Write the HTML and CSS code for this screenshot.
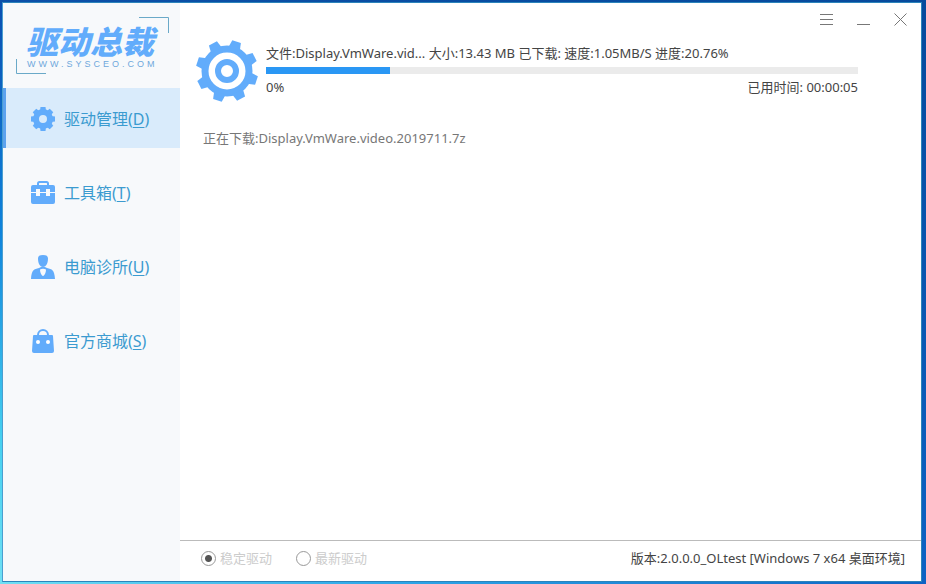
FILE: index.html
```html
<!DOCTYPE html>
<html lang="zh-CN">
<head>
<meta charset="utf-8">
<meta name="viewport" content="width=device-width, initial-scale=1">
<title>驱动总裁</title>
<link rel="stylesheet" href="styles.css">
</head>
<body>
<div class="window">
  <aside class="sidebar">
    <div class="brand">
      <svg class="brand-frame" viewBox="0 0 154 58" aria-hidden="true">
        <path d="M123 .5H152.500V16" />
        <path d="M.5 42V56.500H30" />
      </svg>
      <div class="brand-text">
        <div class="brand-name">驱动总裁</div>
        <div class="brand-site">WWW.SYSCEO.COM</div>
      </div>
    </div>
    <nav class="menu">
      <a class="menu-item active" href="#drivers">
        <svg class="menu-icon" viewBox="0 0 24 24" aria-hidden="true">
          <circle cx="12" cy="12" r="7" fill="none" stroke="currentColor" stroke-width="6"/>
          <g fill="currentColor">
            <path id="t" d="M9 4L9.500 0h5L15 4z"/>
            <use href="#t" transform="rotate(45 12 12)"/>
            <use href="#t" transform="rotate(90 12 12)"/>
            <use href="#t" transform="rotate(135 12 12)"/>
            <use href="#t" transform="rotate(180 12 12)"/>
            <use href="#t" transform="rotate(225 12 12)"/>
            <use href="#t" transform="rotate(270 12 12)"/>
            <use href="#t" transform="rotate(315 12 12)"/>
          </g>
        </svg>
        <span>驱动管理(<u>D</u>)</span>
      </a>
      <a class="menu-item" href="#tools">
        <svg class="menu-icon" viewBox="0 0 24 24" aria-hidden="true">
          <path d="M7 5V2.500Q7 1 8.500 1h7Q17 1 17 2.500V5" fill="none" stroke="currentColor" stroke-width="2"/>
          <path d="M2 4h20q2 0 2 2v5h-5V8h-4v3H9V8H5v3H0V6q0-2 2-2zM0 12h5v3h4v-3h6v3h4v-3h5v9q0 2-2 2H2q-2 0-2-2z" fill="currentColor"/>
        </svg>
        <span>工具箱(<u>T</u>)</span>
      </a>
      <a class="menu-item" href="#clinic">
        <svg class="menu-icon" viewBox="0 0 24 24" aria-hidden="true">
          <path d="M12 0c3.500 0 5 1 5 3.500 0 4-1.500 8.500-5 8.500S7 7.500 7 3.500C7 1 8.500 0 12 0zM8 13q4-3 8 0c5 1 7.500 2 8 11H0c.5-9 3-10 8-11z" fill="currentColor"/>
          <path d="M9 14.500q3-1.500 6 0c0 3-1.500 6-3 6.500-1.500-.5-3-3.500-3-6.500z" fill="#f7f9fc"/>
        </svg>
        <span>电脑诊所(<u>U</u>)</span>
      </a>
      <a class="menu-item" href="#store">
        <svg class="menu-icon" viewBox="0 0 24 24" aria-hidden="true">
          <path d="M7 8V6a5 5 0 0 1 10 0v2" fill="none" stroke="currentColor" stroke-width="2"/>
          <path d="M3 6h18q1 0 1 1l1 15q0 2-2 2H3q-2 0-2-2L2 7q0-1 1-1z" fill="currentColor"/>
          <circle cx="7" cy="13" r="2" fill="#fff"/><circle cx="17" cy="13" r="2" fill="#fff"/>
        </svg>
        <span>官方商城(<u>S</u>)</span>
      </a>
    </nav>
  </aside>
  <main class="content">
    <div class="controls">
      <button type="button" aria-label="菜单"><svg viewBox="0 0 14 14"><path d="M0 1.500h13M0 6.500h13M0 11.500h13"/></svg></button>
      <button type="button" aria-label="最小化"><svg viewBox="0 0 14 14"><path d="M0 11.500h13"/></svg></button>
      <button type="button" aria-label="关闭"><svg viewBox="0 0 14 14"><path d="M.5 .5l12 12M12.500 .5l-12 12"/></svg></button>
    </div>
    <section class="download">
      <svg class="gear" viewBox="0 0 62 62" aria-hidden="true">
        <circle cx="31" cy="31" r="22" fill="none" stroke="currentColor" stroke-width="7"/>
        <circle cx="31" cy="31" r="9" fill="none" stroke="currentColor" stroke-width="6"/>
        <g fill="currentColor" transform="rotate(18 31 31)">
          <path id="b" d="M25 8L26.500 0h9L37 8z"/>
          <use href="#b" transform="rotate(45 31 31)"/>
          <use href="#b" transform="rotate(90 31 31)"/>
          <use href="#b" transform="rotate(135 31 31)"/>
          <use href="#b" transform="rotate(180 31 31)"/>
          <use href="#b" transform="rotate(225 31 31)"/>
          <use href="#b" transform="rotate(270 31 31)"/>
          <use href="#b" transform="rotate(315 31 31)"/>
        </g>
      </svg>
      <div class="progress-info">
        <div class="line">文件:Display.VmWare.vid... 大小:13.43 MB 已下载: 速度:1.05MB/S 进度:20.76%</div>
        <div class="bar" role="progressbar" aria-label="下载进度" aria-valuenow="21" aria-valuemin="0" aria-valuemax="100"><div class="bar-fill" style="width:21%"></div></div>
        <div class="line split"><span>0%</span><span>已用时间: 00:00:05</span></div>
      </div>
    </section>
    <p class="status">正在下载:Display.VmWare.video.2019711.7z</p>
    <footer class="footer">
      <label class="choice"><input type="radio" name="channel" checked disabled>稳定驱动</label>
      <label class="choice"><input type="radio" name="channel" disabled>最新驱动</label>
      <span class="version">版本:2.0.0.0_OLtest [Windows 7 x64 桌面环境]</span>
    </footer>
  </main>
</div>
</body>
</html>
```
FILE: styles.css
```css
* { box-sizing: border-box; }

body {
  margin: 0;
  min-height: 100vh;
  display: flex;
  padding: 2px 4px 2px 2px;
  background:
    linear-gradient(90deg, #0b50a8, #064a9c) top / 100% 3px no-repeat,
    linear-gradient(90deg, #6fe0f4, #2fa9ea 40%, #0d63c4) bottom / 100% 3px no-repeat,
    linear-gradient(#064a9c, #0d63c4) right / 5px 100% no-repeat,
    linear-gradient(#0a4fb0, #0f84dc 40%, #45d0f0 75%, #6fe0f4);
  color: #444;
  font-family: "Noto Sans", "Noto Sans CJK SC", sans-serif;
  font-size: 13px;
  line-height: 20px;
}

.window {
  flex: 1;
  display: grid;
  grid-template-columns: 177px 1fr;
  border: 1px solid #2c84bb;
  border-left-color: #4a9fd0;
  background: #fff;
}

.sidebar {
  background: #f7f9fb;
}

.brand {
  display: grid;
  height: 85px;
  padding: 14px 0 0 13px;
  align-content: start;
  color: #62acfb;
}

.brand-frame {
  grid-area: 1 / 1;
  width: 154px;
  height: 58px;
  fill: none;
  stroke: #6aa9c8;
}

.brand-text {
  grid-area: 1 / 1;
  padding: 8px 0 0 10px;
  white-space: nowrap;
}

.brand-name {
  font-family: "Noto Sans CJK SC", sans-serif;
  font-size: 32px;
  font-weight: 900;
  font-style: italic;
  line-height: 30px;
}

.brand-site {
  margin-top: 3px;
  padding-left: 1px;
  font-family: "Liberation Sans", sans-serif;
  font-size: 9px;
  line-height: 12px;
  letter-spacing: 3px;
  color: #6fa8dc;
}

.menu {
  display: flex;
  flex-direction: column;
  gap: 14px;
}

.menu-item {
  display: flex;
  align-items: center;
  gap: 9px;
  height: 60px;
  padding: 1px 0 0 25px;
  border-left: 3px solid transparent;
  color: #3b9bd0;
  font-size: 16px;
  text-decoration: none;
}

.menu-item.active {
  border-left-color: #5ca2ee;
  background: #d9ebfb;
}

.menu-icon {
  width: 24px;
  height: 24px;
  color: #62acfb;
}

.menu-item u {
  text-underline-offset: 2px;
}

.content {
  display: flex;
  flex-direction: column;
  min-width: 0;
}

.controls {
  display: flex;
  justify-content: flex-end;
  gap: 23px;
  padding: 10px 13px 0 0;
}

.controls button {
  width: 14px;
  height: 14px;
  padding: 0;
  border: 0;
  background: none;
}

.controls svg {
  display: block;
  fill: none;
  stroke: #777;
}

.download {
  display: flex;
  gap: 8px;
  padding: 13px 63px 0 16px;
}

.gear {
  flex: none;
  width: 62px;
  height: 62px;
  color: #62acfb;
}

.progress-info {
  flex: 1;
  padding-top: 3px;
  white-space: nowrap;
}

.bar {
  height: 7px;
  margin: 4px 0 3px;
  background: #ebebeb;
}

.bar-fill {
  height: 100%;
  background: #2a97f4;
}

.split {
  display: flex;
  justify-content: space-between;
}

.status {
  margin: 26px 0 0 23px;
  color: #777;
}

.footer {
  display: flex;
  align-items: center;
  gap: 24px;
  height: 41px;
  margin-top: auto;
  padding: 0 16px 6px 21px;
  border-top: 1px solid #bbb;
}

.choice {
  display: flex;
  align-items: center;
  gap: 4px;
  color: #ccc;
}

.choice input {
  appearance: none;
  width: 15px;
  height: 15px;
  margin: 0;
  border: 1px solid #999;
  border-radius: 50%;
  background: #fff;
}

.choice input:checked {
  background: radial-gradient(circle, #555 3px, #fff 4px);
}

.version {
  margin-left: auto;
}
```
